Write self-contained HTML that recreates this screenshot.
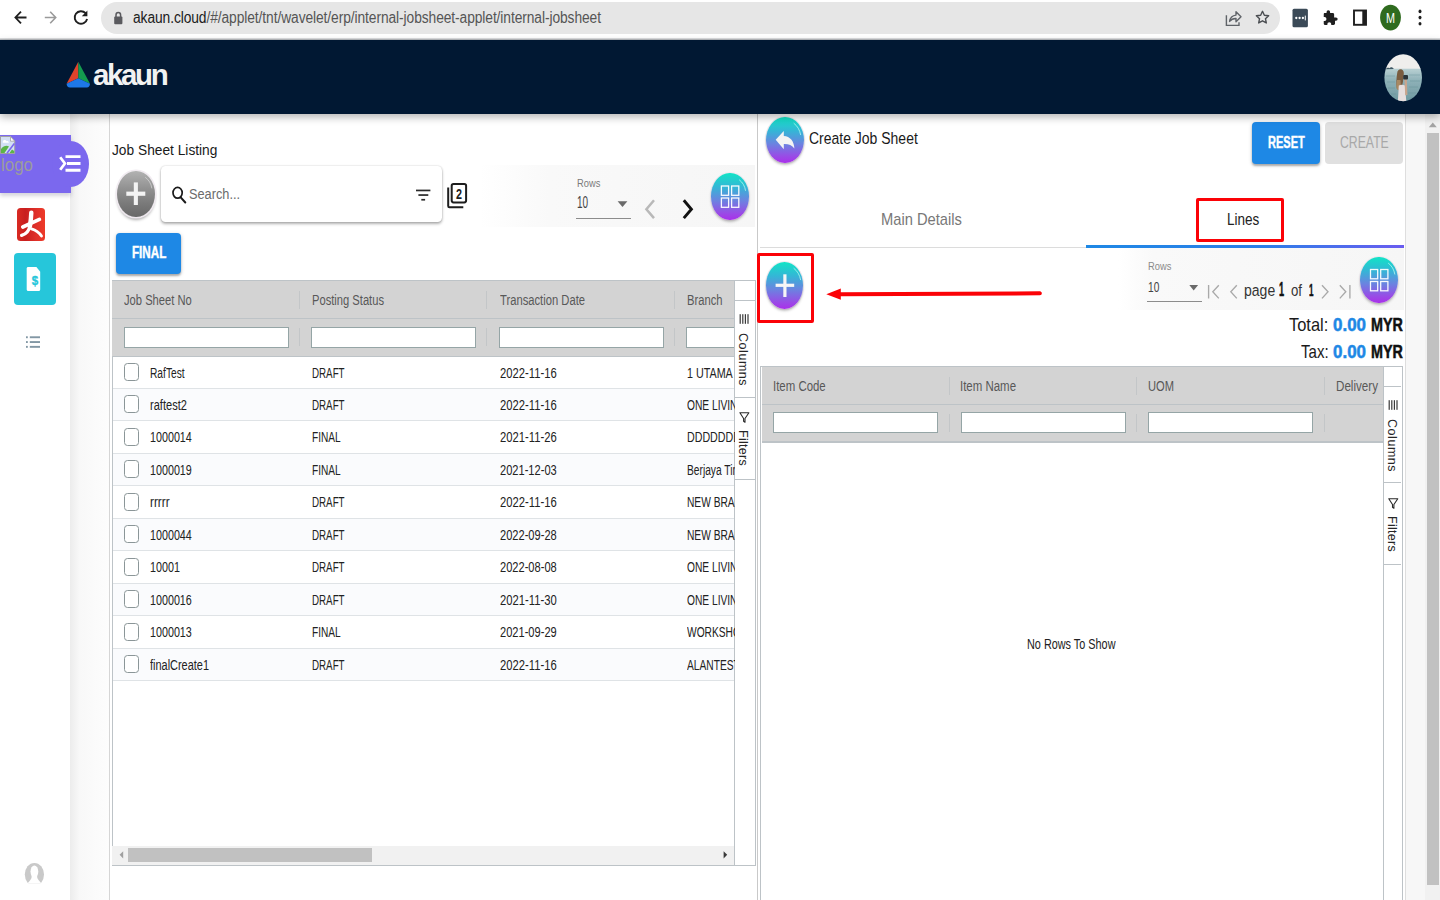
<!DOCTYPE html>
<html lang="en">
<head>
<meta charset="utf-8">
<title>Job Sheet</title>
<style>
*{box-sizing:border-box;margin:0;padding:0}
html,body{width:1440px;height:900px;overflow:hidden;background:#fff;font-family:"Liberation Sans",sans-serif;color:#111}
.abs,.b{position:absolute}
#chrome{position:absolute;left:0;top:0;width:1440px;height:40px;background:#fff}
#chrome svg{position:absolute;left:0;top:0}
#urlbar{position:absolute;left:101px;top:2.2px;width:1178.5px;height:31.8px;border-radius:16px;background:#e6e6e6}
#urltext{position:absolute;left:133px;top:8.6px;font-size:15.6px;color:#555;white-space:nowrap;transform:scaleX(.885);transform-origin:left center;letter-spacing:-.1px;line-height:18px}
#urltext b{font-weight:normal;color:#202020}
#hdr{position:absolute;left:0;top:40px;width:1440px;height:74px;background:#011833;box-shadow:0 3px 8px rgba(0,0,0,.3)}
#brand{position:absolute;left:93px;top:58.3px;font-size:29.5px;font-weight:bold;color:#f2f2f2;letter-spacing:-2.4px;line-height:34px}
#side{position:absolute;left:0;top:114px;width:70px;height:786px;background:#fff}
#gap{position:absolute;left:70px;top:114px;width:40px;height:786px;background:linear-gradient(90deg,#ececec 0,#f8f8f8 25%,#fdfdfd 100%);border-right:1px solid #d6d6d6}
#lp{position:absolute;left:110px;top:114px;width:648px;height:786px;background:#fff}
#rp{position:absolute;left:757px;top:114px;width:649px;height:786px;background:#fff;border-left:1.5px solid #c9c9c9;border-right:1px solid #dedede}
#rgap{position:absolute;left:1406px;top:114px;width:19px;height:786px;background:#f7f7f7}
#pscroll{position:absolute;left:1425px;top:114px;width:15px;height:786px;background:#f1f1f1}
#pscroll i{position:absolute;left:2px;top:19px;width:12px;height:752px;background:#c1c1c1}
span.t{position:absolute;white-space:nowrap;line-height:1;transform-origin:0 0;display:block}
#bclip{position:absolute;left:0;top:0;width:734.5px;height:900px;overflow:hidden}
.orb{position:absolute;border-radius:50%;background:linear-gradient(180deg,#12e4c6 0%,#34b6d6 30%,#6a84e0 58%,#9a4ae6 86%,#a930ea 100%);box-shadow:0 2px 2.5px rgba(0,0,0,.24),0 0 0 1px rgba(238,230,238,.75)}
.orb.g{background:linear-gradient(180deg,#b2b2b2 0%,#949494 35%,#7a7a7a 70%,#686868 100%)}
.btn{position:absolute;border-radius:4px;background:#1e88e5;box-shadow:0 2px 2px rgba(0,0,0,.25),0 1px 4px rgba(0,0,0,.18)}
.grid{position:absolute;background:#fff;border:1px solid #bdc3c7}
.ghead{position:absolute;left:0;top:0;background:#d3d3d3}
.gl{position:absolute;background:#bdc3c7}
.sep{position:absolute;width:1px;background:#c3c6c8}
.fin{position:absolute;background:#fff;border:1px solid #95a5a6;height:20.5px}
.row{position:absolute;left:1px;border-bottom:1px solid #dfe3e6}
.row.o{background:#fafbfd}
.cb{position:absolute;width:15px;height:18px;border:1.6px solid #8b9698;border-radius:3.5px;background:#fff}
.sb{position:absolute;background:#fff;border-left:1px solid #bdc3c7}
.vt{position:absolute;transform-origin:0 0;transform:rotate(90deg);white-space:nowrap;font-size:12.5px;color:#262626;letter-spacing:.55px;line-height:1}
.redbox{position:absolute;border:3.3px solid #fb0207;border-radius:2px}
.grid>.in{position:absolute;left:-1px;top:-.5px;width:100%;height:100%}

</style>
</head>
<body>
<div id="chrome">
  <div id="urlbar"></div>
  <svg width="1440" height="40" viewBox="0 0 1440 40">
    <g fill="none" stroke="#1f1f1f" stroke-width="1.8" stroke-linecap="butt" stroke-linejoin="miter">
      <path d="M26.5 17.5H15.8M21 11.6l-5.6 5.9 5.6 5.9"/>
    </g>
    <g fill="none" stroke="#9a9a9a" stroke-width="1.6">
      <path d="M44.8 17.5h10.6M50.2 11.8l5.5 5.7-5.5 5.7"/>
    </g>
    <g fill="none" stroke="#1f1f1f" stroke-width="1.9">
      <path d="M85.6 13.2a6.3 6.3 0 1 0 1.5 5.8"/>
    </g>
    <path d="M87.4 10.6v5.6h-5.6z" fill="#1f1f1f"/>
    <g>
      <rect x="114.2" y="16.6" width="8.2" height="7.6" rx="1" fill="#5a5a5e"/>
      <path d="M116 17v-2.1a2.3 2.3 0 0 1 4.6 0V17" fill="none" stroke="#5a5a5e" stroke-width="1.5"/>
    </g>
    <g fill="none" stroke="#5f6368" stroke-width="1.4">
      <path d="M1226.4 15.2v10.2h12.6v-3.2"/>
      <path d="M1229.6 21.4c.6-4 3-6 6.4-6.3v-3.3l5 5-5 5v-3.3c-2.6-.1-4.8.8-6.4 2.900z" stroke-linejoin="round"/>
    </g>
    <path d="M1262.5 11.300l1.850 3.950 4.3.5-3.2 2.950.85 4.250-3.8-2.150-3.8 2.150.85-4.250-3.2-2.950 4.3-.5z" fill="none" stroke="#4a4d51" stroke-width="1.4" stroke-linejoin="round"/>
    <rect x="1292.5" y="8.8" width="15.4" height="18.4" rx="1.5" fill="#3b4a57"/>
    <g fill="#fff"><circle cx="1296.3" cy="18" r="1.150"/><circle cx="1299.6" cy="18" r="1.150"/><circle cx="1302.9" cy="18" r="1.150"/><rect x="1304.8" y="15.6" width="1" height="4.8"/></g>
    <g transform="translate(1330 18) scale(.88) translate(-1330 -18)"><path d="M1335.8 17.300h-1.100v-3.400c0-.9-.7-1.6-1.6-1.600h-3v-1.100a2 2 0 0 0-4 0v1.100h-2.100c-.9 0-1.1.7-1.1 1.600v3h.9a2.2 2.2 0 0 1 0 4.400h-.9v3c0 .9.4 1.6 1.3 1.600h2.800v-1a2.2 2.2 0 0 1 4.4 0v1h2.700c.9 0 1.6-.7 1.6-1.600v-3.200h1.100a1.9 1.9 0 0 0 0-3.800z" fill="#1f1f1f"/></g>
    <rect x="1354" y="10.5" width="12" height="14.3" fill="none" stroke="#1f1f1f" stroke-width="1.9"/>
    <rect x="1362.3" y="10.5" width="3.7" height="14.3" fill="#1f1f1f"/>
    <ellipse cx="1390.5" cy="17.6" rx="10.4" ry="12.8" fill="#2f6b1f"/>
    <text x="1390.5" y="23.3" font-family="Liberation Sans, sans-serif" font-size="15.5" fill="#fff" text-anchor="middle" textLength="9" lengthAdjust="spacingAndGlyphs">M</text>
    <g fill="#1f1f1f"><ellipse cx="1420" cy="11.4" rx="1.5" ry="1.8"/><ellipse cx="1420" cy="17.6" rx="1.5" ry="1.8"/><ellipse cx="1420" cy="23.8" rx="1.5" ry="1.8"/></g>
    <rect x="0" y="38.5" width="1440" height="1.5" fill="#b9bcbf"/>
  </svg>
  <div id="urltext"><b>akaun.cloud</b>/#/applet/tnt/wavelet/erp/internal-jobsheet-applet/internal-jobsheet</div>
</div>
<div id="side"></div>
<div id="gap"></div>
<div id="lp"></div>
<div id="rp"></div>
<div id="rgap"></div>
<div id="pscroll"><i></i></div>

<!-- sidebar items -->
<div class="b" style="left:0;top:135px;width:70.5px;height:58px;background:#7b68ee;box-shadow:0 3px 4px rgba(60,60,90,.22)"></div>
<div class="b" style="left:51.5px;top:140.5px;width:37px;height:46.5px;border-radius:50%;background:#7b68ee"></div>
<div class="b" style="left:16.5px;top:208px;width:28.5px;height:33px;border-radius:3.5px;background:linear-gradient(90deg,#d92a22 0%,#c81f1f 30%,#e0312a 70%,#ee3a28 100%)"></div>
<div class="b" style="left:14px;top:253px;width:42px;height:52px;border-radius:4px;background:#26c6da"></div>

<!-- left panel boxes -->
<div class="b" style="left:480px;top:165px;width:275px;height:62px;background:linear-gradient(90deg,#fff 0,#f9f9f9 25%,#f6f6f6 100%)"></div>
<div class="b" style="left:161.3px;top:165.6px;width:281px;height:56.6px;border-radius:4.5px;background:#fff;box-shadow:0 2px 3px rgba(0,0,0,.3),0 0 2px rgba(0,0,0,.2)"></div>
<div class="orb g" style="left:117.1px;top:170.6px;width:37.5px;height:46px;box-shadow:0 0 0 1.6px rgba(240,234,240,.95),0 3px 3px rgba(0,0,0,.32)"></div>
<div class="orb" style="left:711.4px;top:173.2px;width:37.5px;height:46.5px"></div>
<div class="b" style="left:576.4px;top:217.8px;width:54.4px;height:1.2px;background:#8c8c8c"></div>
<div class="btn" style="left:116.3px;top:232.6px;width:64.7px;height:41.3px"></div>

<!-- left grid -->
<div class="grid" style="left:112px;top:280px;width:643.5px;height:585.5px"><div class="in">
  <div class="ghead" style="width:622px;height:75.5px"></div>
  <div class="gl" style="left:0;top:37.5px;width:622px;height:1px"></div>
  <div class="gl" style="left:0;top:75.3px;width:622px;height:1.2px"></div>
  <div class="sep" style="left:186.5px;top:10px;height:18px"></div>
  <div class="sep" style="left:374px;top:10px;height:18px"></div>
  <div class="sep" style="left:561.5px;top:10px;height:18px"></div>
  <div class="sep" style="left:186.5px;top:47px;height:18px"></div>
  <div class="sep" style="left:374px;top:47px;height:18px"></div>
  <div class="sep" style="left:561.5px;top:47px;height:18px"></div>
  <div class="fin" style="left:11.5px;top:46.8px;width:165px"></div>
  <div class="fin" style="left:199px;top:46.8px;width:165px"></div>
  <div class="fin" style="left:386.5px;top:46.8px;width:165px"></div>
  <div class="fin" style="left:574px;top:46.8px;width:60px"></div>
  <div class="row" style="top:76.00px;width:621px;height:32.475px"></div>
  <div class="cb" style="left:11.5px;top:82.40px"></div>
  <div class="row o" style="top:108.47px;width:621px;height:32.475px"></div>
  <div class="cb" style="left:11.5px;top:114.88px"></div>
  <div class="row" style="top:140.95px;width:621px;height:32.475px"></div>
  <div class="cb" style="left:11.5px;top:147.35px"></div>
  <div class="row o" style="top:173.43px;width:621px;height:32.475px"></div>
  <div class="cb" style="left:11.5px;top:179.83px"></div>
  <div class="row" style="top:205.90px;width:621px;height:32.475px"></div>
  <div class="cb" style="left:11.5px;top:212.30px"></div>
  <div class="row o" style="top:238.38px;width:621px;height:32.475px"></div>
  <div class="cb" style="left:11.5px;top:244.78px"></div>
  <div class="row" style="top:270.85px;width:621px;height:32.475px"></div>
  <div class="cb" style="left:11.5px;top:277.25px"></div>
  <div class="row o" style="top:303.33px;width:621px;height:32.475px"></div>
  <div class="cb" style="left:11.5px;top:309.73px"></div>
  <div class="row" style="top:335.80px;width:621px;height:32.475px"></div>
  <div class="cb" style="left:11.5px;top:342.20px"></div>
  <div class="row o" style="top:368.28px;width:621px;height:32.475px"></div>
  <div class="cb" style="left:11.5px;top:374.68px"></div>
  <div class="b" style="left:0;top:565px;width:622px;height:19px;background:#f1f1f1"></div>
  <div class="b" style="left:15.5px;top:567.3px;width:244px;height:14.5px;background:#c1c1c1"></div>
  <div class="sb" style="left:622px;top:0;width:20.5px;height:584px"></div>
  <div class="gl" style="left:622px;top:19px;width:20.5px;height:1px"></div>
  <div class="gl" style="left:622px;top:116px;width:20.5px;height:1px"></div>
  <div class="gl" style="left:622px;top:198.5px;width:20.5px;height:1px"></div>
  <div class="vt" style="left:637.2px;top:52px">Columns</div>
  <div class="vt" style="left:637.2px;top:149.8px;letter-spacing:.3px">Filters</div>
</div></div>

<!-- right panel boxes -->
<div class="b" style="left:760px;top:247px;width:643.5px;height:1px;background:#dcdcdc"></div>
<div class="b" style="left:1086px;top:245px;width:317.5px;height:3px;background:linear-gradient(90deg,#1e88e5 0%,#2b7fe8 55%,#6a5cf0 100%)"></div>
<div class="b" style="left:1118px;top:248.4px;width:285.5px;height:61.8px;background:linear-gradient(90deg,#fff 0,#f9f9f9 12%,#f6f6f6 100%)"></div>
<div class="orb" style="left:765.8px;top:116.7px;width:38px;height:46.6px"></div>
<div class="orb" style="left:766.1px;top:262px;width:37.4px;height:46.9px"></div>
<div class="orb" style="left:1360.4px;top:256.7px;width:37.5px;height:46.6px"></div>
<div class="btn" style="left:1252.2px;top:122.2px;width:67.7px;height:41.6px"></div>
<div class="btn" style="left:1324.8px;top:122.2px;width:78.2px;height:41.6px;background:#e0e0e0;box-shadow:none"></div>
<div class="b" style="left:1147.3px;top:300.9px;width:54.7px;height:1.1px;background:#8c8c8c"></div>
<div class="redbox" style="left:1195.9px;top:198.4px;width:88.5px;height:44px"></div>
<div class="redbox" style="left:756.9px;top:252.5px;width:56.8px;height:70px"></div>

<!-- right grid -->
<div class="grid" style="left:760px;top:366.3px;width:642.5px;height:540px"><div class="in" style="left:.5px">
  <div class="ghead" style="width:621.7px;height:75px"></div>
  <div class="gl" style="left:0;top:37.4px;width:621.7px;height:1px"></div>
  <div class="gl" style="left:0;top:74.6px;width:621.7px;height:1.2px"></div>
  <div class="sep" style="left:187px;top:10px;height:18px"></div>
  <div class="sep" style="left:374.7px;top:10px;height:18px"></div>
  <div class="sep" style="left:562.2px;top:10px;height:18px"></div>
  <div class="sep" style="left:187px;top:47px;height:18px"></div>
  <div class="sep" style="left:374.7px;top:47px;height:18px"></div>
  <div class="sep" style="left:562.2px;top:47px;height:18px"></div>
  <div class="fin" style="left:11.5px;top:45.6px;width:165px"></div>
  <div class="fin" style="left:199px;top:45.6px;width:165px"></div>
  <div class="fin" style="left:386.7px;top:45.6px;width:165px"></div>
  <div class="sb" style="left:621.7px;top:0;width:18.3px;height:540px"></div>
  <div class="gl" style="left:621.7px;top:19.5px;width:18.3px;height:1px"></div>
  <div class="gl" style="left:621.7px;top:115.5px;width:18.3px;height:1px"></div>
  <div class="gl" style="left:621.7px;top:197.7px;width:18.3px;height:1px"></div>
  <div class="vt" style="left:636.4px;top:52.5px">Columns</div>
  <div class="vt" style="left:636.4px;top:148.8px;letter-spacing:.3px">Filters</div>
</div></div>

<!--ICONS_START-->
<svg class="abs" style="left:0;top:0" width="1440" height="900" viewBox="0 0 1440 900">
  <!-- sidebar: broken image icon -->
  <g>
    <path d="M0.5 136.500h10l4.2 4.700v12.300h-14.200z" fill="#d3e0f5" stroke="#a2a2a2" stroke-width="1"/>
    <path d="M10.5 136.500v4.700h4.200z" fill="#fff" stroke="#a2a2a2" stroke-width=".8"/>
    <path d="M1 153v-4c2.5-3 5.5-4 8-2.400l-4.5 6.400z" fill="#5cb548"/>
    <path d="M9.5 153l2.5-3.6 2.2 1.600v2z" fill="#5cb548"/>
    <path d="M2.8 141.500c.8-1.8 3-1.8 3.8-.2 1-.5 2.2.1 2.2 1.400H2.800z" fill="#fff"/>
    <path d="M14.3 143.500L7 153.3" stroke="#7b68ee" stroke-width="1.6"/>
  </g>
  <!-- sidebar: menu toggle -->
  <g fill="none" stroke="#fff" stroke-width="2.7">
    <path d="M60.2 157.300l4.7 6.2-4.7 6.3"/>
    <path d="M65.5 156.600h15M67 163.500h13.500M65.5 170.200h15" stroke-width="2.9"/>
  </g>
  <!-- sidebar: red app figure -->
  <g fill="none" stroke="#fff" stroke-linecap="round">
    <path d="M31.3 212.6c-.2 4.5-.6 9-1.3 13.4" stroke-width="4.4"/>
    <path d="M22.8 227l16.6-7.6" stroke-width="3.7"/>
    <path d="M29.8 226c-.8 5-3.4 8-8.2 9.4" stroke-width="3.3"/>
    <path d="M31.5 228.800c4.3 1.2 7.6 3.6 10 7.2" stroke-width="2.9"/>
  </g>
  <!-- sidebar: invoice doc -->
  <path d="M28.2 267h8.200l3.8 4.800v17.700c0 .9-.6 1.5-1.5 1.500H28.200c-.9 0-1.5-.6-1.5-1.500v-21c0-.9.6-1.5 1.5-1.500z" fill="#fff"/>
  <text x="34.9" y="285.3" font-family="Liberation Sans, sans-serif" font-weight="bold" font-size="12.5" fill="#26c6da" stroke="#26c6da" stroke-width=".35" text-anchor="middle" textLength="6.4" lengthAdjust="spacingAndGlyphs">$</text>
  <!-- sidebar: list icon -->
  <g fill="#8297a4">
    <rect x="26" y="336.3" width="1.8" height="1.9"/><rect x="29.8" y="336.3" width="10.2" height="1.9"/>
    <rect x="26" y="341.1" width="1.8" height="1.9"/><rect x="29.8" y="341.1" width="10.2" height="1.9"/>
    <rect x="26" y="345.9" width="1.8" height="1.9"/><rect x="29.8" y="345.9" width="10.2" height="1.9"/>
  </g>
  <!-- sidebar: bottom avatar -->
  <defs><clipPath id="avb"><rect x="20" y="860" width="30" height="23.3"/></clipPath></defs>
  <g clip-path="url(#avb)">
    <ellipse cx="34.4" cy="874.6" rx="9.6" ry="11.7" fill="#c9c9c9"/>
    <ellipse cx="34.4" cy="871.6" rx="3.9" ry="6.2" fill="#fff"/>
    <path d="M31.6 875.500h5.600c-.3 2 .4 3.6 1.7 4.900l3 3.600H27l3-3.600c1.3-1.3 1.9-2.9 1.6-4.900z" fill="#fff"/>
  </g>

  <!-- left: gray plus -->
  <g fill="#f3f3f3"><rect x="126.3" y="191.6" width="19" height="4.2"/><rect x="133.8" y="182.4" width="4.1" height="22.6"/></g>
  <path d="M145.5 177.500c3.5 2.5 5.6 6 6.3 10.5" fill="none" stroke="#d8d8d8" stroke-width=".9" stroke-linecap="round" opacity=".8"/>
  <!-- left: search icon -->
  <g fill="none" stroke="#1b1b1b" stroke-width="1.7"><ellipse cx="177.6" cy="192.8" rx="4.6" ry="5.4"/><path d="M180.7 197.300l4.6 5.2" stroke-width="2" stroke-linecap="round"/></g>
  <!-- left: filter icon -->
  <g fill="#2a2a2a"><rect x="416" y="189.6" width="14.4" height="1.7"/><rect x="418.4" y="194.2" width="9.9" height="1.7"/><rect x="421.3" y="198.9" width="3.8" height="1.7"/></g>
  <!-- left: copy "2" icon -->
  <g fill="none" stroke="#1d1d1d" stroke-width="2">
    <rect x="451.7" y="184" width="14.4" height="18.4" rx="1.8"/>
    <path d="M448.2 187.500v18.600c0 .7.5 1.2 1.2 1.200h13.9"/>
  </g>
  <text x="458.9" y="198.5" font-family="Liberation Sans, sans-serif" font-weight="bold" font-size="14.8" fill="#1d1d1d" text-anchor="middle" textLength="6" lengthAdjust="spacingAndGlyphs">2</text>
  <!-- left: select arrow + pager -->
  <path d="M617.6 201.200h9.800l-4.9 5.800z" fill="#6a6a6a"/>
  <path d="M654 200.300l-7.6 8.9 7.6 8.9" fill="none" stroke="#b9b9b9" stroke-width="2.5"/>
  <path d="M683.8 200.300l7.6 8.9-7.6 8.9" fill="none" stroke="#111" stroke-width="2.9"/>
  <!-- left: grid icon in orb -->
  <g fill="none" stroke="#fff" stroke-width="1.3" opacity=".95">
    <rect x="721.4" y="186" width="7.2" height="9.3"/><rect x="731.6" y="186" width="7.2" height="9.3"/>
    <rect x="721.4" y="198" width="7.2" height="9.3"/><rect x="731.6" y="198" width="7.2" height="9.3"/>
  </g>
  <path d="M739.5 180c3.2 2.4 5.3 6 6 10.4" fill="none" stroke="#b8fff2" stroke-width=".9" stroke-linecap="round" opacity=".85"/>
  <!-- left grid: scrollbar arrows -->
  <path d="M123.2 851.200v7.200l-3.6-3.600z" fill="#a0a0a0"/>
  <path d="M723.6 851.200v7.200l3.6-3.600z" fill="#3a3a3a"/>
  <!-- left grid sidebar icons -->
  <g fill="#3a3a3a"><rect x="739.6" y="314.2" width="1.2" height="9.6"/><rect x="742.2" y="314.2" width="1.2" height="9.6"/><rect x="744.8" y="314.2" width="1.2" height="9.6"/><rect x="747.4" y="314.2" width="1.2" height="9.6"/></g>
  <path d="M739.9 412.8h9l-3.9 5.7v3.8l-1.4-1.100v-2.700z" fill="none" stroke="#2a2a2a" stroke-width="1.1" stroke-linejoin="round" transform="rotate(0 744.4 417)"/>

  <!-- right: back arrow -->
  <path d="M775.7 139.800l8.1-8.800v5c6.3.4 10.2 5 10.6 12.4-2.5-3.4-6-4.6-10.6-4.400v5.300z" fill="#f4f4f4"/>
  <path d="M794 123.400c3.4 2.6 5.7 6.4 6.6 11.2" fill="none" stroke="#b8fff2" stroke-width=".9" stroke-linecap="round" opacity=".85"/>
  <!-- right: plus -->
  <g fill="#f6f6f6"><rect x="775.6" y="283.7" width="18.6" height="3.2"/><rect x="783.3" y="274.3" width="3.2" height="22.7"/></g>
  <path d="M794 268.500c3.4 2.6 5.7 6.4 6.6 11.2" fill="none" stroke="#b8fff2" stroke-width=".9" stroke-linecap="round" opacity=".85"/>
  <!-- right: red arrow -->
  <path d="M826.3 294.2l14.5-5.600v3.600l199-.9c2.7 0 2.7 4 0 4l-199 .9v3.600z" fill="#fb0207"/>
  <!-- right: pager -->
  <path d="M1189.3 285h8.800l-4.4 5.600z" fill="#6a6a6a"/>
  <g fill="none" stroke="#a9a9a9" stroke-width="1.35">
    <path d="M1208.6 285v13.500M1218.8 285.200l-6 6.6 6 6.6"/>
    <path d="M1236.8 285.200l-6 6.6 6 6.6"/>
    <path d="M1322 285.200l6 6.6-6 6.6"/>
    <path d="M1339.8 285.200l6 6.6-6 6.600M1349.9 285v13.5"/>
  </g>
  <g fill="none" stroke="#fff" stroke-width="1.3" opacity=".95">
    <rect x="1370.5" y="269.5" width="7.2" height="9.3"/><rect x="1380.7" y="269.5" width="7.2" height="9.3"/>
    <rect x="1370.5" y="281.5" width="7.2" height="9.3"/><rect x="1380.7" y="281.5" width="7.2" height="9.3"/>
  </g>
  <path d="M1388.5 263.300c3.3 2.5 5.5 6.2 6.3 10.8" fill="none" stroke="#b8fff2" stroke-width=".9" stroke-linecap="round" opacity=".85"/>
  <!-- right grid sidebar icons -->
  <g fill="#3a3a3a"><rect x="1388.6" y="400.2" width="1.2" height="9.6"/><rect x="1391.2" y="400.2" width="1.2" height="9.6"/><rect x="1393.8" y="400.2" width="1.2" height="9.6"/><rect x="1396.4" y="400.2" width="1.2" height="9.6"/></g>
  <path d="M1388.8 498.800h9l-3.9 5.700v3.800l-1.4-1.100v-2.700z" fill="none" stroke="#2a2a2a" stroke-width="1.1" stroke-linejoin="round"/>
  <!-- page scrollbar arrow -->
  <path d="M1428.8 127.300h8l-4-4.800z" fill="#a3a3a3"/>
</svg>

<!--ICONS_END-->
<div id="txt">
<span class="t" id="t0" style="left:111.9px;top:142.3px;font-size:15.4px;color:#1a1a1a;transform:scaleX(0.8926)">Job Sheet Listing</span>
<span class="t" id="t1" style="left:189.0px;top:186.8px;font-size:14.9px;color:#6b6b6b;transform:scaleX(0.8558)">Search...</span>
<span class="t" id="t2" style="left:576.7px;top:176.6px;font-size:11.6px;color:#7a7a7a;transform:scaleX(0.8034)">Rows</span>
<span class="t" id="t3" style="left:576.7px;top:195.1px;font-size:16px;color:#444;transform:scaleX(0.6237)">10</span>
<span class="t" id="t4" style="left:131.7px;top:244.5px;font-size:15.6px;color:#fff;transform:scaleX(0.7472);font-weight:bold;-webkit-text-stroke:0.44px">FINAL</span>
<span class="t" id="t5" style="left:124.0px;top:292.7px;font-size:14px;color:#585858;transform:scaleX(0.7991)">Job Sheet No</span>
<span class="t" id="t6" style="left:311.8px;top:292.7px;font-size:14px;color:#585858;transform:scaleX(0.7975)">Posting Status</span>
<span class="t" id="t7" style="left:499.5px;top:292.7px;font-size:14px;color:#585858;transform:scaleX(0.8012)">Transaction Date</span>
<span class="t" id="t8" style="left:687.0px;top:292.7px;font-size:14px;color:#585858;transform:scaleX(0.8003)">Branch</span>
<span class="t" id="t9" style="left:150.4px;top:366.5px;font-size:13.8px;color:#222;transform:scaleX(0.7396)">RafTest</span>
<span class="t" id="t10" style="left:311.8px;top:366.5px;font-size:13.8px;color:#222;transform:scaleX(0.7087)">DRAFT</span>
<span class="t" id="t11" style="left:499.5px;top:366.5px;font-size:13.8px;color:#222;transform:scaleX(0.8158)">2022-11-16</span>
<span class="t" id="t13" style="left:150.4px;top:399.0px;font-size:13.8px;color:#222;transform:scaleX(0.8019)">raftest2</span>
<span class="t" id="t14" style="left:311.8px;top:399.0px;font-size:13.8px;color:#222;transform:scaleX(0.7087)">DRAFT</span>
<span class="t" id="t15" style="left:499.5px;top:399.0px;font-size:13.8px;color:#222;transform:scaleX(0.8158)">2022-11-16</span>
<span class="t" id="t17" style="left:150.4px;top:431.4px;font-size:13.8px;color:#222;transform:scaleX(0.7781)">1000014</span>
<span class="t" id="t18" style="left:311.8px;top:431.4px;font-size:13.8px;color:#222;transform:scaleX(0.7338)">FINAL</span>
<span class="t" id="t19" style="left:499.5px;top:431.4px;font-size:13.8px;color:#222;transform:scaleX(0.8158)">2021-11-26</span>
<span class="t" id="t21" style="left:150.4px;top:463.9px;font-size:13.8px;color:#222;transform:scaleX(0.7781)">1000019</span>
<span class="t" id="t22" style="left:311.8px;top:463.9px;font-size:13.8px;color:#222;transform:scaleX(0.7338)">FINAL</span>
<span class="t" id="t23" style="left:499.5px;top:463.9px;font-size:13.8px;color:#222;transform:scaleX(0.8041)">2021-12-03</span>
<span class="t" id="t25" style="left:150.4px;top:496.4px;font-size:13.8px;color:#222;transform:scaleX(0.8528)">rrrrr</span>
<span class="t" id="t26" style="left:311.8px;top:496.4px;font-size:13.8px;color:#222;transform:scaleX(0.7087)">DRAFT</span>
<span class="t" id="t27" style="left:499.5px;top:496.4px;font-size:13.8px;color:#222;transform:scaleX(0.8158)">2022-11-16</span>
<span class="t" id="t29" style="left:150.4px;top:528.8px;font-size:13.8px;color:#222;transform:scaleX(0.7781)">1000044</span>
<span class="t" id="t30" style="left:311.8px;top:528.8px;font-size:13.8px;color:#222;transform:scaleX(0.7087)">DRAFT</span>
<span class="t" id="t31" style="left:499.5px;top:528.8px;font-size:13.8px;color:#222;transform:scaleX(0.8041)">2022-09-28</span>
<span class="t" id="t33" style="left:150.4px;top:561.3px;font-size:13.8px;color:#222;transform:scaleX(0.7792)">10001</span>
<span class="t" id="t34" style="left:311.8px;top:561.3px;font-size:13.8px;color:#222;transform:scaleX(0.7087)">DRAFT</span>
<span class="t" id="t35" style="left:499.5px;top:561.3px;font-size:13.8px;color:#222;transform:scaleX(0.8041)">2022-08-08</span>
<span class="t" id="t37" style="left:150.4px;top:593.7px;font-size:13.8px;color:#222;transform:scaleX(0.7781)">1000016</span>
<span class="t" id="t38" style="left:311.8px;top:593.7px;font-size:13.8px;color:#222;transform:scaleX(0.7087)">DRAFT</span>
<span class="t" id="t39" style="left:499.5px;top:593.7px;font-size:13.8px;color:#222;transform:scaleX(0.8158)">2021-11-30</span>
<span class="t" id="t41" style="left:150.4px;top:626.2px;font-size:13.8px;color:#222;transform:scaleX(0.7781)">1000013</span>
<span class="t" id="t42" style="left:311.8px;top:626.2px;font-size:13.8px;color:#222;transform:scaleX(0.7338)">FINAL</span>
<span class="t" id="t43" style="left:499.5px;top:626.2px;font-size:13.8px;color:#222;transform:scaleX(0.8041)">2021-09-29</span>
<span class="t" id="t45" style="left:150.4px;top:658.7px;font-size:13.8px;color:#222;transform:scaleX(0.7929)">finalCreate1</span>
<span class="t" id="t46" style="left:311.8px;top:658.7px;font-size:13.8px;color:#222;transform:scaleX(0.7087)">DRAFT</span>
<span class="t" id="t47" style="left:499.5px;top:658.7px;font-size:13.8px;color:#222;transform:scaleX(0.8158)">2022-11-16</span>
<span class="t" id="t49" style="left:809.2px;top:129.9px;font-size:16.3px;color:#1a1a1a;transform:scaleX(0.8586)">Create Job Sheet</span>
<span class="t" id="t50" style="left:880.8px;top:211.7px;font-size:15.7px;color:#787878;transform:scaleX(0.9373)">Main Details</span>
<span class="t" id="t51" style="left:1226.6px;top:211.5px;font-size:15.7px;color:#222;transform:scaleX(0.8610)">Lines</span>
<span class="t" id="t52" style="left:1267.9px;top:134.5px;font-size:16px;color:#fff;transform:scaleX(0.6880);font-weight:bold;-webkit-text-stroke:0.45px">RESET</span>
<span class="t" id="t53" style="left:1339.8px;top:134.5px;font-size:16px;color:#a8a8a8;transform:scaleX(0.7659)">CREATE</span>
<span class="t" id="t54" style="left:1147.5px;top:260.1px;font-size:11.6px;color:#8a8a8a;transform:scaleX(0.8034)">Rows</span>
<span class="t" id="t55" style="left:1147.5px;top:279.7px;font-size:14.8px;color:#444;transform:scaleX(0.6861)">10</span>
<span class="t" id="t56" style="left:1243.7px;top:281.9px;font-size:17.2px;color:#333;transform:scaleX(0.8157)">page</span>
<span class="t" id="t57" style="left:1278.7px;top:280.1px;font-size:19.6px;color:#111;transform:scaleX(0.4676);font-weight:bold;-webkit-text-stroke:0.55px">1</span>
<span class="t" id="t58" style="left:1291.0px;top:281.9px;font-size:17.2px;color:#333;transform:scaleX(0.7669)">of</span>
<span class="t" id="t59" style="left:1308.9px;top:282.3px;font-size:17px;color:#111;transform:scaleX(0.4752);font-weight:bold;-webkit-text-stroke:0.48px">1</span>
<span class="t" id="t60" style="left:1289.4px;top:315.6px;font-size:18.5px;color:#1a1a1a;transform:scaleX(0.8888)">Total:</span>
<span class="t" id="t61" style="left:1333.2px;top:315.6px;font-size:18.5px;color:#1e88e5;transform:scaleX(0.9163);font-weight:bold;-webkit-text-stroke:0.52px">0.00</span>
<span class="t" id="t62" style="left:1370.7px;top:315.6px;font-size:18.5px;color:#111;transform:scaleX(0.7757);font-weight:bold;-webkit-text-stroke:0.52px">MYR</span>
<span class="t" id="t63" style="left:1301.1px;top:343.2px;font-size:18.5px;color:#1a1a1a;transform:scaleX(0.8133)">Tax:</span>
<span class="t" id="t64" style="left:1333.2px;top:343.2px;font-size:18.5px;color:#1e88e5;transform:scaleX(0.9163);font-weight:bold;-webkit-text-stroke:0.52px">0.00</span>
<span class="t" id="t65" style="left:1370.7px;top:343.2px;font-size:18.5px;color:#111;transform:scaleX(0.7757);font-weight:bold;-webkit-text-stroke:0.52px">MYR</span>
<span class="t" id="t66" style="left:772.6px;top:378.8px;font-size:14px;color:#585858;transform:scaleX(0.8159)">Item Code</span>
<span class="t" id="t67" style="left:960.3px;top:378.8px;font-size:14px;color:#585858;transform:scaleX(0.8179)">Item Name</span>
<span class="t" id="t68" style="left:1148.0px;top:378.8px;font-size:14px;color:#585858;transform:scaleX(0.7958)">UOM</span>
<span class="t" id="t69" style="left:1335.5px;top:378.8px;font-size:14px;color:#585858;transform:scaleX(0.8304)">Delivery</span>
<span class="t" id="t70" style="left:1027.4px;top:637.6px;font-size:13.8px;color:#222;transform:scaleX(0.7868)">No Rows To Show</span>
<span class="t" id="t71" style="left:0.8px;top:155.3px;font-size:19px;color:#9c9c9c;transform:scaleX(0.8908)">logo</span>
<div id="bclip">
<span class="t" id="t12" style="left:687.0px;top:366.5px;font-size:13.8px;color:#222;transform:scaleX(0.7792)">1 UTAMA</span>
<span class="t" id="t16" style="left:687.0px;top:399.0px;font-size:13.8px;color:#222;transform:scaleX(0.7400)">ONE LIVING</span>
<span class="t" id="t20" style="left:687.0px;top:431.4px;font-size:13.8px;color:#222;transform:scaleX(0.7728)">DDDDDDD</span>
<span class="t" id="t24" style="left:687.0px;top:463.9px;font-size:13.8px;color:#222;transform:scaleX(0.7400)">Berjaya Times</span>
<span class="t" id="t28" style="left:687.0px;top:496.4px;font-size:13.8px;color:#222;transform:scaleX(0.7400)">NEW BRANCH</span>
<span class="t" id="t32" style="left:687.0px;top:528.8px;font-size:13.8px;color:#222;transform:scaleX(0.7400)">NEW BRANCH</span>
<span class="t" id="t36" style="left:687.0px;top:561.3px;font-size:13.8px;color:#222;transform:scaleX(0.7400)">ONE LIVING</span>
<span class="t" id="t40" style="left:687.0px;top:593.7px;font-size:13.8px;color:#222;transform:scaleX(0.7400)">ONE LIVING</span>
<span class="t" id="t44" style="left:687.0px;top:626.2px;font-size:13.8px;color:#222;transform:scaleX(0.7400)">WORKSHOP</span>
<span class="t" id="t48" style="left:687.0px;top:658.7px;font-size:13.8px;color:#222;transform:scaleX(0.7400)">ALANTEST</span>
</div>
</div>
<div id="hdr"></div>
<svg class="abs" style="left:0;top:40px" width="1440" height="74" viewBox="0 0 1440 74">
  <g>
    <path d="M78.3 21.800L66.6 43.800l11.7-5.600z" fill="#e0432c"/>
    <path d="M78.3 21.800l11.7 22-11.7-5.600z" fill="#149c4f"/>
    <path d="M66.6 43.800l11.7-5.6 11.7 5.600c-.3 2.6-1.2 3.7-3.2 3.700h-17c-2 0-2.9-1.1-3.2-3.700z" fill="#1e78e8"/>
  </g>
  <defs><clipPath id="avc"><ellipse cx="1403.2" cy="37.8" rx="18.8" ry="23.5"/></clipPath>
  <linearGradient id="avg" x1="0" y1="0" x2="0" y2="1"><stop offset="0" stop-color="#b9d0d3"/><stop offset=".35" stop-color="#8fb2b8"/><stop offset="1" stop-color="#6e98a0"/></linearGradient></defs>
  <g clip-path="url(#avc)">
    <rect x="1384" y="14" width="39" height="15" fill="#efeeec"/>
    <rect x="1384" y="28.7" width="39" height="33" fill="url(#avg)"/>
    <path d="M1385.8 29.200c1-1.6 2.6-1.8 3.6-1 1.2-1.4 3.4-1.2 4.4.9z" fill="#3f5864"/>
    <g stroke="#5f8a93" stroke-width=".7" opacity=".55"><path d="M1386 36h9M1409 35h11M1387 42h8M1410 41h10M1388 48h7M1409 47h9M1391 54h5M1408 53h8M1410 58h5"/></g>
    <path d="M1397.2 33c.3-3 2.6-4.3 4.6-3.4 1.6.8 2.2 2.6 2 4.600l-.6 5.600c-.4 3.6-1 6.8-2.6 9.6-1.4.6-2.8.2-3.8-1-.8-5-.4-10.4.4-15.400z" fill="#7a5c40"/>
    <path d="M1397 40c-.6 3.2-.8 6.2-.2 9 1 1 2.2 1.3 3.4.8.6-3.4.6-6.6.2-9.800z" fill="#a88862"/>
    <path d="M1398.8 45.500c2-.9 4.4-.9 6.2.1l1.4 17h-8.600z" fill="#e7dedd"/>
    <path d="M1404.4 38.500l2.4.6.6 16-2.2.2z" fill="#c9a58d"/>
    <rect x="1403.2" y="35" width="4.8" height="4.4" rx="1" fill="#2b353b"/>
  </g>
</svg>
<div id="brand">akaun</div>
</body>
</html>
